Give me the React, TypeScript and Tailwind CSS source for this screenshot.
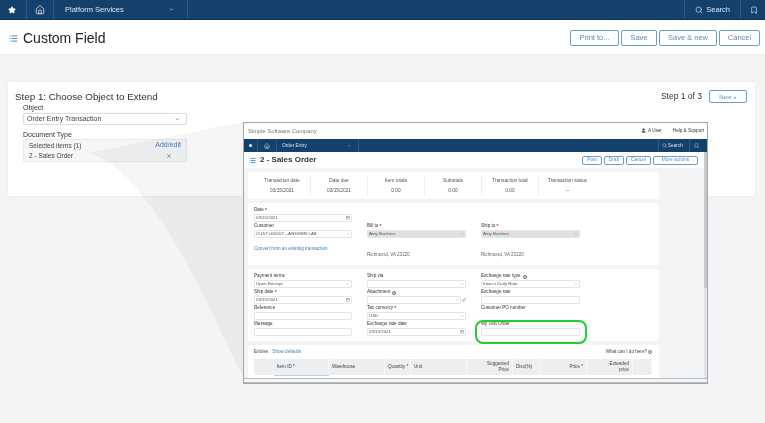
import { Bookmark, ChevronDown, House, List, Paperclip, Search, Star, User, X, Calendar, CircleHelp } from "lucide-react"

const navBg = "bg-[#14406c]"

function Btn({ label, className }: { label: string; className: string }) {
  return (
    <div className={`flex items-center justify-center whitespace-nowrap rounded-[2px] border border-[#6d9dc9] bg-white leading-none text-[#5b8dbb] ${className}`}>
      {label}
    </div>
  )
}

function Divider({ className }: { className: string }) {
  return <div className={`w-px self-stretch bg-[#2f5a85] ${className}`} />
}

function Label({ text, req, help }: { text?: string; req?: boolean; help?: boolean }) {
  return (
    <div className="flex h-[8px] items-end gap-[1px] pb-[1px] text-[4.6px] leading-none text-[#333]">
      {text}
      {req && <span className="text-[6px] leading-none text-[#d0021b]">*</span>}
      {help && <CircleHelp className="ml-[1px] size-[4px] text-[#333]" strokeWidth={3} />}
    </div>
  )
}

function Input({ value, select, date, grey, clip }: { value?: string; select?: boolean; date?: boolean; grey?: boolean; clip?: boolean }) {
  return (
    <div className="flex h-[8px] items-center gap-[1px]">
      <div className={`flex h-full flex-1 items-center justify-between rounded-[1px] border border-[#e4e5e7] px-[1px] text-[4.4px] leading-none text-[#555] ${grey ? "bg-[#dfe0e2]" : "bg-white"}`}>
        <span>{value}</span>
        {select && <ChevronDown className="size-[4px] text-[#888]" />}
        {date && <Calendar className="size-[4px] text-[#666]" />}
      </div>
      {clip && <Paperclip className="size-[4px] text-[#666]" />}
    </div>
  )
}

function Field(props: { label?: string; req?: boolean; help?: boolean; value?: string; select?: boolean; date?: boolean; grey?: boolean; clip?: boolean; noInput?: boolean }) {
  return (
    <div>
      <Label text={props.label} req={props.req} help={props.help} />
      {props.noInput ? <div className="h-[8px]" /> : <Input {...props} />}
    </div>
  )
}

const stats = [
  ["Transaction date", "03/15/2021"],
  ["Date due", "03/15/2021"],
  ["Item totals", "0.00"],
  ["Subtotals", "0.00"],
  ["Transaction total", "0.00"],
  ["Transaction status", "--"],
]

const columns = [
  { label: "", w: "w-[20px]" },
  { label: "Item ID *", w: "w-[55px]" },
  { label: "Warehouse", w: "w-[56px]" },
  { label: "Quantity *", w: "w-[26px] whitespace-nowrap" },
  { label: "Unit", w: "w-[56px]" },
  { label: "Suggested Price", w: "w-[46px] justify-end text-right", inner: "max-w-[26px]" },
  { label: "Disc(%)", w: "w-[28px]" },
  { label: "Price *", w: "w-[46px] justify-end text-right" },
  { label: "Extended price", w: "w-[46px] justify-end text-right", inner: "max-w-[24px]" },
  { label: "", w: "w-[19px]" },
]

function Inset() {
  return (
    <div className="absolute top-[122px] left-[243px] z-20 flex h-[262px] w-[465px] flex-col overflow-hidden border border-[#a3a6a9] bg-[#f3f4f6] blur-[0.3px]">
      <div className="flex h-[16px] shrink-0 items-center justify-between bg-white pr-[3px] pl-[4px] text-[5px] text-[#666]">
        <span className="text-[5.8px] text-[#777]">Simple Software Company</span>
        <div className="flex items-center text-[#333]">
          <User className="mr-[2px] size-[5px] fill-[#222]" />
          <span className="mr-[11px] text-[4.6px]">A User</span>
          <span className="text-[4.6px]">Help &amp; Support</span>
        </div>
      </div>
      <div className={`flex h-[13px] shrink-0 items-center ${navBg} text-[4.8px] text-[#d7e1ea]`}>
        <div className="ml-[5px] size-[3px] rounded-full bg-white" />
        <Divider className="ml-[5px]" />
        <House className="ml-[6px] size-[6px]" />
        <Divider className="ml-[6px]" />
        <span className="ml-[5px]">Order Entry</span>
        <ChevronDown className="ml-[40px] size-[4px]" />
        <Divider className="ml-[7px]" />
        <div className="flex-1" />
        <Divider className="mr-[3px]" />
        <Search className="mr-[1px] size-[5px]" />
        <span>Search</span>
        <Divider className="ml-[6px]" />
        <Bookmark className="mx-[4px] size-[5px]" />
        <div className="w-[4px]" />
      </div>
      <div className="flex min-h-0 flex-1">
        <div className="flex min-w-0 flex-1 flex-col">
          <div className="flex h-[16px] shrink-0 items-center bg-white pl-[5px]">
            <List className="size-[7px] text-[#4f87bd]" strokeWidth={3} />
            <span className="ml-[4px] text-[8px] font-bold text-[#333]">2 - Sales Order</span>
            <div className="ml-auto mr-[6px] flex gap-[2px] text-[4.8px]">
              <Btn label="Post" className="h-[9px] w-[20px]" />
              <Btn label="Draft" className="h-[9px] w-[20px]" />
              <Btn label="Cancel" className="h-[9px] w-[25px]" />
              <Btn label="More actions" className="h-[9px] w-[45px]" />
            </div>
          </div>
          <div className="ml-[4px] flex min-h-0 w-[411px] flex-1 flex-col gap-[4px] pt-[4px]">
            <div className="flex h-[27px] shrink-0 items-center bg-white px-[6px]">
              {stats.map(([label, value], i) => (
                <div key={label} className={`flex h-[20px] w-[57px] flex-col items-center justify-center gap-[3px] text-[4.8px] text-[#555] ${i < 5 ? "border-r border-[#eceef0]" : ""}`}>
                  <span>{label}</span>
                  <span>{value}</span>
                </div>
              ))}
            </div>
            <div className="h-[62px] shrink-0 bg-white px-[6px] pt-[3px]">
              <div className="grid grid-cols-[98px_99px_99px] gap-x-[15px]">
                <Field label="Date" req value="03/15/2021" date />
                <div />
                <div />
                <Field label="Customer" value="CUST-000007 --ANSWER LAB" select />
                <Field label="Bill to" req value="Amy Buckner" grey select />
                <Field label="Ship to" req value="Amy Buckner" grey select />
                <div className="mt-[7px] text-[4.6px] leading-[8px] text-[#3f7fc0]">Convert from an existing transaction</div>
                <div className="mt-[13px] text-[4.6px] leading-[8px] text-[#666]">Richmond, VA 23220</div>
                <div className="mt-[13px] text-[4.6px] leading-[8px] text-[#666]">Richmond, VA 23220</div>
              </div>
            </div>
            <div className="h-[72px] shrink-0 bg-white px-[6px] pt-[3px]">
              <div className="grid grid-cols-[98px_99px_99px] gap-x-[15px]">
                <Field label="Payment terms" value="Upon Receipt" select />
                <Field label="Ship via" select />
                <Field label="Exchange rate type" help value="Intacct Daily Rate" select />
                <Field label="Ship date" req value="03/15/2021" date />
                <Field label="Attachment" help select clip />
                <Field label="Exchange rate" />
                <Field label="Reference" />
                <Field label="Tax currency" req value="USD" select />
                <Field label="Customer PO number" noInput />
                <Field label="Message" />
                <Field label="Exchange rate date" value="03/15/2021" date />
                <Field label="My Test Order" />
              </div>
            </div>
            <div className="min-h-0 flex-1 overflow-hidden bg-white px-[6px] pt-[3px]">
              <div className="flex h-[8px] items-center text-[4.6px] text-[#444]">
                <span>Entries</span>
                <span className="ml-[4px] text-[#3f7fc0]">Show defaults</span>
                <span className="ml-auto mr-[1px]">What can I do here?</span>
                <CircleHelp className="mr-[1px] size-[4px]" strokeWidth={3} />
              </div>
              <div className="mt-[3px] flex h-[16px] w-[398px] bg-[#edeef0] text-[4.6px] leading-[6px] text-[#444]">
                {columns.map((c, i) => (
                  <div key={i} className={`flex shrink-0 items-center border-r border-[#f8f8f9] px-[3px] ${c.w}`}>
                    <span className={c.inner}>{c.label}</span>
                  </div>
                ))}
              </div>
              <div className="ml-[20px] h-[2px] w-[55px] border-t border-[#bcd3ea]" />
            </div>
          </div>
        </div>
        <div className="flex w-[3px] shrink-0 flex-col">
          <div className="h-[136px] bg-[#c6c8ca]" />
          <div className="flex-1 bg-[#e4e5e7]" />
        </div>
      </div>
      <div className="h-[5px] shrink-0 border-y border-[#b9bbbd] bg-[#f4f5f6]" />
    </div>
  )
}

export default function App() {
  return (
    <div className="relative h-[423px] w-[765px] overflow-hidden bg-[#f3f4f6] font-['Liberation_Sans',Arial,sans-serif] blur-[0.4px]">
      <header className={`flex h-[20px] items-center border-b border-[#0e3156] ${navBg} text-[7.5px] text-[#dfe7ef]`}>
        <Star className="ml-[8px] size-[8px] fill-white text-white" />
        <Divider className="ml-[10px]" />
        <House className="ml-[8px] size-[10px]" />
        <Divider className="ml-[8px]" />
        <span className="ml-[11px]">Platform Services</span>
        <ChevronDown className="ml-[45px] size-[5px]" strokeWidth={3} />
        <Divider className="ml-[13px]" />
        <div className="flex-1" />
        <Divider className="mr-[10px]" />
        <Search className="mr-[3px] size-[8px]" />
        <span>Search</span>
        <Divider className="ml-[10px]" />
        <Bookmark className="ml-[9px] mr-[7px] size-[8px]" />
      </header>
      <div className="flex h-[35px] items-center border-b border-[#eceef0] bg-white pt-[2px] pr-[5px] pl-[9px]">
        <List className="size-[9px] text-[#3f80bf]" strokeWidth={2.5} />
        <h1 className="ml-[5px] text-[14px] text-[#222]">Custom Field</h1>
        <div className="ml-auto flex gap-[2px] text-[7.5px]">
          <Btn label="Print to..." className="h-[16px] w-[49px]" />
          <Btn label="Save" className="h-[16px] w-[36px]" />
          <Btn label="Save & new" className="h-[16px] w-[58px]" />
          <Btn label="Cancel" className="h-[16px] w-[41px]" />
        </div>
      </div>
      <main className="pt-[27px] pl-[8px]">
        <section className="h-[114px] w-[747px] bg-white pt-[8px] pr-[8px] pl-[7px] shadow-[0_0_2px_#e6e7e9]">
          <div className="flex h-[13px] items-center">
            <h2 className="text-[9.8px] leading-none text-[#333]">Step 1: Choose Object to Extend</h2>
            <span className="ml-auto text-[8.5px] leading-none text-[#333]">Step 1 of 3</span>
            <Btn label="Next »" className="ml-[7px] h-[13px] w-[38px] text-[6px]" />
          </div>
          <div className="ml-[8px] w-[164px] text-[7px] text-[#333]">
            <div className="leading-[9px]">Object</div>
            <div className="mt-[1px] flex h-[12px] items-center justify-between rounded-[2px] border border-[#dcdee0] bg-white px-[3px] text-[#444] shadow-[0_0_1px_#ddd]">
              Order Entry Transaction
              <ChevronDown className="mr-[3px] size-[5px] text-[#666]" strokeWidth={3} />
            </div>
            <div className="mt-[5px] leading-[10px]">Document Type</div>
            <div className="mt-[-1px] h-[23px] rounded-[1px] border border-[#e8e9eb] bg-[#f5f6f7] px-[5px] text-[6.5px] text-[#444]">
              <div className="flex h-[11px] items-center justify-between">
                Selected items (1)
                <span className="text-[7px] text-[#3f80bf]">Add/edit</span>
              </div>
              <div className="flex h-[10px] items-center justify-between">
                2 - Sales Order
                <X className="mr-[9px] size-[6px] text-[#555]" />
              </div>
            </div>
          </div>
        </section>
      </main>
      <svg className="absolute inset-0 z-10" width="765" height="423" viewBox="0 0 765 423">
        <path d="M88 153 L243 122 L243 378 C215 320 180 240 143 197 C125 175 110 158 88 153 Z" fill="#000" fillOpacity="0.04" />
      </svg>
      <Inset />
      <div className="absolute top-[320px] left-[475px] z-30 h-[24px] w-[112px] rounded-[8px] border-2 border-[#22cc33]" />
    </div>
  )
}
